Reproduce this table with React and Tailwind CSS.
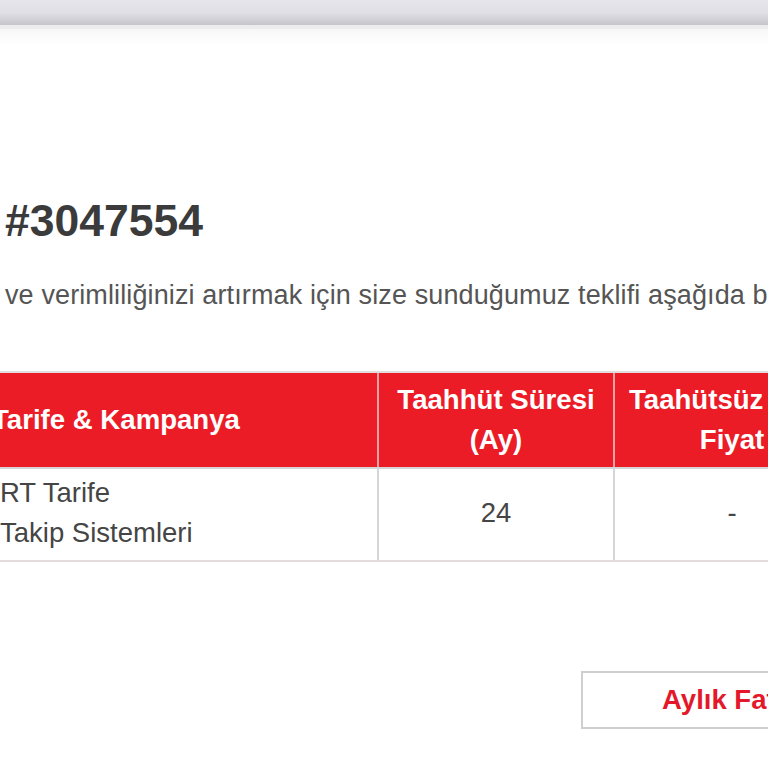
export default function App() {
  return (
    <div className="relative w-[768px] h-[768px] overflow-hidden bg-white font-['Liberation_Sans',Arial,sans-serif]">
      {/* top browser bar */}
      <div className="h-[25px] bg-gradient-to-b from-[#e6e5ea] via-[#e1e0e6] to-[#c6c5cb]" />
      <div className="h-[4px] bg-[#ececef]" />
      <div className="h-[16px] bg-gradient-to-b from-[#f7f7f8] to-white" />

      {/* heading */}
      <div className="mt-[154px] pl-[5px] text-[44.5px] leading-[44px] font-bold text-[#3b3b3b] whitespace-nowrap">
        #3047554
      </div>

      {/* paragraph */}
      <div className="mt-[39px] pl-[5px] text-[27px] leading-[27px] tracking-[0.12px] text-[#555555] whitespace-nowrap">
        ve verimliliğinizi artırmak için size sunduğumuz teklifi aşağıda bulabilirsiniz.
      </div>

      {/* table */}
      <div className="mt-[62px] w-[900px] border-t-2 border-b-2 border-[#e3dcdc]">
        <div className="flex h-[94px] bg-[#eb1c26] text-white font-bold text-[27.6px] leading-[40px]">
          <div className="w-[377px] flex items-center whitespace-nowrap">
            <span className="-ml-[8px]">Tarife &amp; Kampanya</span>
          </div>
          <div className="w-[236px] border-l-2 border-[#f3a0a4] flex items-center justify-center text-center whitespace-nowrap">
            <span>
              Taahhüt Süresi
              <br />
              (Ay)
            </span>
          </div>
          <div className="w-[236px] border-l-2 border-[#f3a0a4] flex items-center justify-center text-center whitespace-nowrap">
            <span>
              Taahütsüz Aylık
              <br />
              Fiyat
            </span>
          </div>
        </div>
        <div className="flex h-[93px] border-t-2 border-[#d6d6d6] text-[27.5px] leading-[40px] text-[#454545]">
          <div className="w-[377px] flex flex-col justify-center whitespace-nowrap pb-[4px]">
            <span>RT Tarife</span>
            <span>Takip Sistemleri</span>
          </div>
          <div className="w-[236px] border-l-2 border-[#d6d6d6] flex items-center justify-center pb-[3px]">
            24
          </div>
          <div className="w-[236px] border-l-2 border-[#d6d6d6] flex items-center justify-center pb-[3px]">
            -
          </div>
        </div>
      </div>

      {/* button */}
      <div className="mt-[109px] ml-[581px] w-[320px] h-[58px] border-2 border-[#cfcfcf] flex items-center pl-[79px] whitespace-nowrap text-[27.5px] font-bold text-[#e3192b]">
        Aylık Fatura
      </div>
    </div>
  );
}
